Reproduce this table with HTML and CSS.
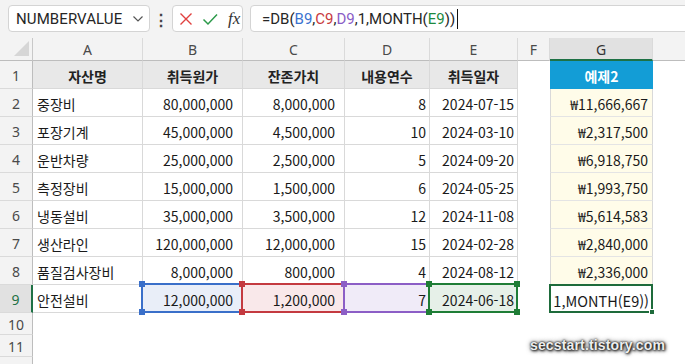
FILE: index.html
```html
<!DOCTYPE html>
<html lang="ko">
<head>
<meta charset="utf-8">
<title>DB</title>
<link rel="stylesheet" href="styles.css">
</head>
<body>
<div class="app">
  <div class="topbar">
    <div class="namebox">
      <span class="nb-text">NUMBERVALUE</span>
      <svg class="chev" width="12" height="8" viewBox="0 0 12 8"><path d="M1.5 1.5 L6 6 L10.5 1.5" fill="none" stroke="#555" stroke-width="1.2"/></svg>
    </div>
    <div class="dots">⋮</div>
    <div class="fxbox">
      <svg width="14" height="14" viewBox="0 0 14 14"><path d="M1.5 1.5 L12.5 12.5 M12.5 1.5 L1.5 12.5" stroke="#e0403f" stroke-width="1.4" fill="none"/></svg>
      <svg width="16" height="14" viewBox="0 0 16 14"><path d="M1.5 7.5 L6 12 L15 2.5" stroke="#2c9a4a" stroke-width="1.5" fill="none"/></svg>
      <span class="fx">fx</span>
    </div>
    <div class="formula">
      <span>=DB(</span><span class="rb">B9</span><span>,</span><span class="rc">C9</span><span>,</span><span class="rd">D9</span><span>,1,MONTH(</span><span class="re">E9</span><span>))</span><span class="caret"></span>
    </div>
  </div>

  <div class="sheet">
    <div class="corner"><span class="tri"></span></div>
    <div class="ch">A</div><div class="ch">B</div><div class="ch">C</div><div class="ch">D</div><div class="ch">E</div><div class="ch">F</div><div class="ch sel">G</div><div class="ch last"></div>

    <div class="rh">1</div>
    <div class="t th">자산명</div><div class="t th">취득원가</div><div class="t th">잔존가치</div><div class="t th">내용연수</div><div class="t th">취득일자</div>
    <div class="e"></div><div class="g gh">예제2</div><div class="e"></div>

    <div class="rh">2</div>
    <div class="t l">중장비</div><div class="t r">80,000,000</div><div class="t r">8,000,000</div><div class="t n">8</div><div class="t n">2024-07-15</div>
    <div class="e"></div><div class="g">₩11,666,667</div><div class="e"></div>

    <div class="rh">3</div>
    <div class="t l">포장기계</div><div class="t r">45,000,000</div><div class="t r">4,500,000</div><div class="t n">10</div><div class="t n">2024-03-10</div>
    <div class="e"></div><div class="g">₩2,317,500</div><div class="e"></div>

    <div class="rh">4</div>
    <div class="t l">운반차량</div><div class="t r">25,000,000</div><div class="t r">2,500,000</div><div class="t n">5</div><div class="t n">2024-09-20</div>
    <div class="e"></div><div class="g">₩6,918,750</div><div class="e"></div>

    <div class="rh">5</div>
    <div class="t l">측정장비</div><div class="t r">15,000,000</div><div class="t r">1,500,000</div><div class="t n">6</div><div class="t n">2024-05-25</div>
    <div class="e"></div><div class="g">₩1,993,750</div><div class="e"></div>

    <div class="rh">6</div>
    <div class="t l">냉동설비</div><div class="t r">35,000,000</div><div class="t r">3,500,000</div><div class="t n">12</div><div class="t n">2024-11-08</div>
    <div class="e"></div><div class="g">₩5,614,583</div><div class="e"></div>

    <div class="rh">7</div>
    <div class="t l">생산라인</div><div class="t r">120,000,000</div><div class="t r">12,000,000</div><div class="t n">15</div><div class="t n">2024-02-28</div>
    <div class="e"></div><div class="g">₩2,840,000</div><div class="e"></div>

    <div class="rh">8</div>
    <div class="t l">품질검사장비</div><div class="t r">8,000,000</div><div class="t r">800,000</div><div class="t n">4</div><div class="t n">2024-08-12</div>
    <div class="e"></div><div class="g">₩2,336,000</div><div class="e"></div>

    <div class="rh rsel">9</div>
    <div class="t l">안전설비</div>
    <div class="t r ref-b">12,000,000<span class="box"><i class="k tl"></i><i class="k tr"></i><i class="k bl"></i><i class="k br"></i></span></div>
    <div class="t r ref-c">1,200,000<span class="box"><i class="k tl"></i><i class="k tr"></i><i class="k bl"></i><i class="k br"></i></span></div>
    <div class="t n ref-d">7<span class="box"><i class="k tl"></i><i class="k tr"></i><i class="k bl"></i><i class="k br"></i></span></div>
    <div class="t n ref-e">2024-06-18<span class="box"><i class="k tl"></i><i class="k tr"></i><i class="k bl"></i><i class="k br"></i></span></div>
    <div class="e"></div>
    <div class="g edit">
      <span class="eline">1,MONTH(E9))</span>
      <i class="handle"></i>
    </div>
    <div class="e"></div>

    <div class="rh">10</div><div class="blank"></div>
    <div class="rh">11</div><div class="blank"></div>
    <div class="rh"></div><div class="blank"></div>
  </div>

  <div class="watermark">secstart.tistory.com</div>
</div>
</body>
</html>
```

FILE: styles.css
```css
* { box-sizing: border-box; }
html, body { margin: 0; padding: 0; }
body {
  width: 685px;
  height: 364px;
  overflow: hidden;
  background: #ffffff;
  font-family: "Noto Sans CJK KR", "Noto Sans", sans-serif;
}
.app { position: relative; width: 685px; height: 364px; overflow: hidden; }

/* ---------- top bar ---------- */
.topbar {
  height: 38px;
  background: #f3f3f3;
  display: flex;
  align-items: flex-start;
  padding-top: 5px;
  padding-left: 8px;
}
.namebox {
  width: 142px;
  height: 27px;
  background: #fff;
  border: 1px solid #d4d4d4;
  border-radius: 4px;
  display: flex;
  align-items: center;
  justify-content: space-between;
  padding: 0 5px 0 7px;
  font-family: Roboto, "Noto Sans", sans-serif;
  font-size: 15px;
  color: #262626;
}
.nb-text { letter-spacing: 0.1px; }
.chev { margin-top: 1px; }
.dots {
  width: 22px;
  height: 27px;
  display: flex;
  align-items: center;
  justify-content: center;
  font-size: 16px;
  color: #444;
  font-weight: bold;
}
.fxbox {
  width: 71px;
  height: 27px;
  background: #fff;
  border: 1px solid #d4d4d4;
  border-radius: 4px;
  display: flex;
  align-items: center;
  gap: 9px;
  padding-left: 6px;
}
.fx {
  font-family: "Liberation Serif", serif;
  font-style: italic;
  font-size: 17px;
  color: #333;
  margin-left: 1px;
}
.formula {
  margin-left: 7px;
  flex: 1;
  height: 27px;
  margin-right: -10px;
  background: #fff;
  border: 1px solid #d4d4d4;
  border-radius: 4px;
  display: flex;
  align-items: center;
  padding-left: 11px;
  font-family: Roboto, "Noto Sans", sans-serif;
  font-size: 15px;
  color: #262626;
  white-space: pre;
}
.caret {
  display: inline-block;
  width: 1px;
  height: 20px;
  background: #111;
  margin-left: 2px;
}
.rb { color: #3a72cf; }
.rc { color: #c8393e; }
.rd { color: #8a5cc6; }
.re { color: #1e8a3e; }

/* ---------- sheet ---------- */
.sheet {
  display: grid;
  grid-template-columns: 33px 110px 100px 102px 85px 88px 32px 103px 32px;
  grid-template-rows: 23px repeat(9, 28px) 22px 22px 22px;
  font-size: 14px;
}
.corner {
  background: #f3f3f3;
  border-right: 1px solid #c8c8c8;
  border-bottom: 1px solid #bdbdbd;
  display: flex;
  align-items: flex-end;
  justify-content: flex-end;
  padding: 0 3px 4px 0;
}
.tri {
  width: 15px;
  height: 15px;
  background: #d6d6d6;
  clip-path: polygon(100% 0, 100% 100%, 0 100%);
}
.ch {
  background: #f3f3f3;
  border-right: 1px solid #dadada;
  border-bottom: 1px solid #bdbdbd;
  display: flex;
  align-items: center;
  justify-content: center;
  color: #4a4a4a;
  font-family: "Noto Sans", sans-serif;
  font-size: 14px;
  padding-top: 1px;
}
.ch.sel {
  background: #e1e1e1;
  border-bottom: 2px solid #1e7145;
  color: #333;
}
.ch.last { border-right: none; }
.rh {
  grid-column: 1;
  background: #f3f3f3;
  border-right: 1px solid #bdbdbd;
  border-bottom: 1px solid #dadada;
  display: flex;
  align-items: center;
  justify-content: center;
  color: #4a4a4a;
  font-family: "Noto Sans", sans-serif;
  font-size: 14px;
  padding-top: 2px;
}
.rh.rsel {
  background: #e1e1e1;
  border-right: 2px solid #1e7145;
  color: #1e7145;
}
.blank { grid-column: 2 / -1; }

.t {
  position: relative;
  border-right: 1px solid #d9d9d9;
  border-bottom: 1px solid #d9d9d9;
  display: flex;
  align-items: center;
  color: #1a1a1a;
  padding-top: 2px;
  white-space: nowrap;
}
.th {
  background: #e8e8e8;
  justify-content: center;
  font-weight: bold;
  color: #222;
}
.l { padding-left: 4px; }
.r { justify-content: flex-end; padding-right: 9px; }
.n { justify-content: flex-end; padding-right: 3px; }

.g {
  position: relative;
  background: #fffce9;
  border-left: 1px solid #d9d9d9;
  border-right: 1px solid #d9d9d9;
  border-bottom: 1px solid #e4e4e4;
  display: flex;
  align-items: center;
  justify-content: flex-end;
  padding-right: 4px;
  padding-top: 2px;
  color: #1a1a1a;
  white-space: nowrap;
}
.g.gh {
  background: #139dd6;
  color: #fff;
  font-weight: bold;
  justify-content: center;
  padding-right: 0;
  border-color: #139dd6;
}

/* reference highlights */
.box {
  position: absolute;
  top: -2px;
  left: -2px;
  right: -1px;
  bottom: -1px;
  border: 2px solid;
  pointer-events: none;
}
.k {
  position: absolute;
  width: 6px;
  height: 6px;
  background: currentColor;
}
.k.tl { top: -4px; left: -4px; }
.k.tr { top: -4px; right: -4px; }
.k.bl { bottom: -4px; left: -4px; }
.k.br { bottom: -4px; right: -4px; }
.ref-b { background: #e9eef8; }
.ref-b .box { border-color: #3a6fc9; color: #3a6fc9; }
.ref-c { background: #f9e8ea; }
.ref-c .box { border-color: #c43a40; color: #c43a40; }
.ref-d { background: #f0ebf8; }
.ref-d .box { border-color: #8c5ec6; color: #8c5ec6; }
.ref-e { background: #e6f0e8; }
.ref-e .box { border-color: #1f7d36; color: #1f7d36; }

.g.edit {
  background: #fff;
  border: 2px solid #1e6b3b;
  margin-left: -1px;
  margin-top: -1px;
  padding: 3px 2px 0 0;
  align-items: center;
}
.eline {
  font-size: 14.5px;
  white-space: pre;
  color: #1a1a1a;
}
.handle {
  position: absolute;
  right: -4px;
  bottom: -4px;
  width: 6px;
  height: 6px;
  background: #1e6b3b;
  border: 1px solid #fff;
}

.watermark {
  position: absolute;
  left: 530px;
  top: 337px;
  font-family: "Liberation Sans", Arial, sans-serif;
  font-weight: bold;
  font-size: 14px;
  color: #eeeeee;
  text-shadow: 0 0 2px #000, 1px 1px 3px #000, 0 0 5px rgba(0,0,0,0.8);
  letter-spacing: 0.15px;
}
```
